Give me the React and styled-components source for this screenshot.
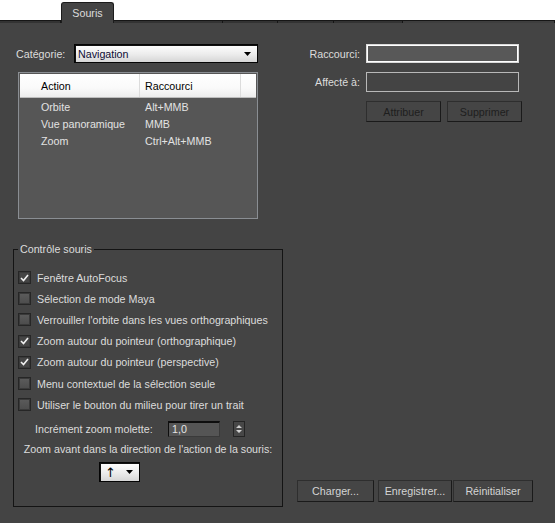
import styled, { createGlobalStyle } from 'styled-components';

const GlobalStyle = createGlobalStyle`
  html, body {
    margin: 0;
    padding: 0;
    background: #ffffff;
  }
  body {
    font-family: "Liberation Sans", Arial, sans-serif;
    font-size: 10.7px;
    color: #dcdcdc;
  }
`;

const Window = styled.div`
  width: 555px;
  height: 523px;
  display: flex;
  flex-direction: column;
`;

const TabBar = styled.div`
  height: 23px;
  display: flex;
  align-items: flex-end;
  background: #ffffff;
`;

const StubTab = styled.div`
  width: ${(p) => p.$w}px;
  flex: ${(p) => (p.$grow ? 1 : 'none')};
  height: 3px;
  box-sizing: border-box;
  background: ${(p) => (p.$light ? '#3e3e3e' : '#333333')};
  border-top: 1px solid #161616;
  border-right: 1px solid #161616;
`;

const ActiveTab = styled.div`
  width: 53px;
  height: 21px;
  box-sizing: border-box;
  background: #444444;
  border: 1px solid #1c1c1c;
  border-bottom: none;
  border-radius: 3px 3px 0 0;
  text-align: center;
  line-height: 20px;
  color: #dcdcdc;
`;

const Panel = styled.div`
  flex: 1;
  display: flex;
  background: #444444;
`;

const LeftCol = styled.div`
  width: 283px;
  box-sizing: border-box;
  padding: 21px 0 0 13px;
  display: flex;
  flex-direction: column;
`;

const RightCol = styled.div`
  flex: 1;
  display: flex;
  flex-direction: column;
  padding: 21px 0 21px 0;
`;

const CategoryRow = styled.div`
  display: flex;
  align-items: center;
  height: 19px;
  padding-left: 3px;
`;

const CategoryLabel = styled.span`
  width: 58px;
`;

const Select = styled.div`
  width: ${(p) => p.$w}px;
  height: ${(p) => p.$h}px;
  margin-left: ${(p) => p.$ml || 0}px;
  box-sizing: border-box;
  display: flex;
  align-items: center;
  justify-content: space-between;
  padding: 0 6px 0 3px;
  border: 1px solid #050505;
  box-shadow: inset 1px 1px 0 #111111;
  background: linear-gradient(#ffffff, #ececec 55%, #d6d6d6);
  color: #0d0d35;
`;

const UpGlyph = styled.span`
  color: #000000;
  font-family: "DejaVu Sans", sans-serif;
  font-size: 13px;
  line-height: 13px;
  padding-left: 2px;
`;

const DownArrow = () => (
  <svg width="7" height="4" viewBox="0 0 7 4">
    <path d="M0 0 H7 L3.5 4 Z" fill="#000" />
  </svg>
);

const ListBox = styled.div`
  width: 240px;
  height: 147px;
  margin: 9px 0 0 5px;
  box-sizing: border-box;
  border: 1px solid #8a8e93;
  padding: 1px;
  background: #565656;
`;

const ListHeader = styled.div`
  display: grid;
  grid-template-columns: 120px 101px 1fr;
  height: 23px;
  background: linear-gradient(#ffffff, #fafafa 60%, #ededed);
  border-bottom: 1px solid #bdbdbd;
  color: #000000;
`;

const HeaderCell = styled.div`
  display: flex;
  align-items: center;
  padding-left: ${(p) => p.$pl}px;
  border-right: 1px solid #dcdcdc;
`;

const ListRow = styled.div`
  display: grid;
  grid-template-columns: 120px 101px 1fr;
  height: 17px;
  align-items: center;
  color: #e2e2e2;
`;

const RowCell = styled.span`
  padding-left: ${(p) => p.$pl}px;
`;

const GroupBox = styled.fieldset`
  margin: 24px 0 0 0;
  padding: 11px 0 0 0;
  width: 270px;
  height: 264px;
  box-sizing: border-box;
  border: 1px solid #141414;
  min-width: 0;
`;

const GroupTitle = styled.legend`
  margin-left: 4px;
  padding: 0 2px;
  line-height: 13px;
  color: #dcdcdc;
`;

const CheckRow = styled.div`
  display: flex;
  align-items: center;
  height: 21.2px;
  padding-left: 4px;
`;

const Box = styled.span`
  width: 13px;
  height: 13px;
  box-sizing: border-box;
  border: 1px solid #262626;
  box-shadow: inset 0 0 0 1px #3a3a3a;
  background: ${(p) => (p.$checked ? '#454545' : 'linear-gradient(#5c5c5c, #4c4c4c)')};
  display: flex;
  align-items: center;
  justify-content: center;
  margin-right: 6px;
`;

const CheckMark = () => (
  <svg width="9" height="8" viewBox="0 0 9 8">
    <path d="M1 4 L3.5 6.5 L8 1" fill="none" stroke="#f0f0f0" strokeWidth="1.6" />
  </svg>
);

const SpinRow = styled.div`
  display: flex;
  align-items: center;
  height: 16px;
  margin-top: 6px;
  padding-left: 21px;
`;

const SpinLabel = styled.span`
  width: 133px;
`;

const SpinInput = styled.div`
  width: 52px;
  height: 16px;
  box-sizing: border-box;
  border-top: 2px solid #0e0e0e;
  border-left: 1px solid #0e0e0e;
  border-right: 1px solid #3a3a3a;
  border-bottom: 1px solid #3a3a3a;
  background: #555555;
  color: #e4e4e4;
  padding-left: 3px;
  line-height: 13px;
`;

const Spinner = styled.div`
  width: 12px;
  height: 16px;
  margin-left: 13px;
  box-sizing: border-box;
  border: 1px solid #242424;
  background: #474747;
  display: flex;
  align-items: center;
  justify-content: center;
`;

const DirectionLabel = styled.div`
  text-align: center;
  margin-top: 5px;
  line-height: 14px;
`;

const DirectionRow = styled.div`
  margin: 6px 0 0 85px;
`;

const FieldRow = styled.div`
  display: flex;
  align-items: center;
  height: ${(p) => p.$h}px;
  margin-top: ${(p) => p.$mt || 0}px;
`;

const FieldLabel = styled.span`
  width: 77px;
  text-align: right;
  margin-right: 6px;
`;

const TextField = styled.div`
  width: 153px;
  height: 100%;
  box-sizing: border-box;
  border: 1px solid ${(p) => (p.$focused ? '#dadada' : '#b8b8b8')};
  box-shadow: ${(p) => (p.$focused ? 'inset 0 0 0 1px #ffffff' : 'none')};
  background: ${(p) => (p.$focused ? '#585858' : '#444444')};
`;

const ButtonRow = styled.div`
  display: flex;
  gap: ${(p) => p.$gap}px;
  padding-left: ${(p) => p.$pl}px;
  margin-top: ${(p) => p.$mt};
`;

const Button = styled.div`
  width: ${(p) => p.$w}px;
  height: ${(p) => p.$h}px;
  margin-left: ${(p) => p.$ml || 0}px;
  box-sizing: border-box;
  display: flex;
  align-items: center;
  justify-content: center;
  background: #454545;
  border: 1px solid #2e2e2e;
  border-right-color: #1a1a1a;
  border-bottom-color: #1a1a1a;
  color: ${(p) => (p.$disabled ? '#1e1e1e' : '#d4d4d4')};
`;

const checks = [
  { label: 'Fenêtre AutoFocus', on: true },
  { label: 'Sélection de mode Maya', on: false },
  { label: "Verrouiller l'orbite dans les vues orthographiques", on: false },
  { label: 'Zoom autour du pointeur (orthographique)', on: true },
  { label: 'Zoom autour du pointeur (perspective)', on: true },
  { label: 'Menu contextuel de la sélection seule', on: false },
  { label: 'Utiliser le bouton du milieu pour tirer un trait', on: false },
];

const actions = [
  ['Orbite', 'Alt+MMB'],
  ['Vue panoramique', 'MMB'],
  ['Zoom', 'Ctrl+Alt+MMB'],
];

export default function App() {
  return (
    <>
      <GlobalStyle />
      <Window>
        <TabBar>
          <StubTab $w={61} />
          <ActiveTab>Souris</ActiveTab>
          <StubTab $w={109} />
          <StubTab $w={55} />
          <StubTab $w={56} />
          <StubTab $w={69} />
          <StubTab $grow $light />
        </TabBar>
        <Panel>
          <LeftCol>
            <CategoryRow>
              <CategoryLabel>Catégorie:</CategoryLabel>
              <Select $w={184} $h={19}>
                Navigation
                <DownArrow />
              </Select>
            </CategoryRow>

            <ListBox>
              <ListHeader>
                <HeaderCell $pl={21}>Action</HeaderCell>
                <HeaderCell $pl={5}>Raccourci</HeaderCell>
                <div />
              </ListHeader>
              {actions.map(([a, k]) => (
                <ListRow key={a}>
                  <RowCell $pl={21}>{a}</RowCell>
                  <RowCell $pl={5}>{k}</RowCell>
                </ListRow>
              ))}
            </ListBox>

            <GroupBox>
              <GroupTitle>Contrôle souris</GroupTitle>
              {checks.map((c) => (
                <CheckRow key={c.label}>
                  <Box $checked={c.on}>{c.on && <CheckMark />}</Box>
                  {c.label}
                </CheckRow>
              ))}
              <SpinRow>
                <SpinLabel>Incrément zoom molette:</SpinLabel>
                <SpinInput>1,0</SpinInput>
                <Spinner>
                  <svg width="6" height="10" viewBox="0 0 6 10">
                    <path d="M0 4 L3 1 L6 4 Z M0 6 L3 9 L6 6 Z" fill="#cfcfcf" />
                  </svg>
                </Spinner>
              </SpinRow>
              <DirectionLabel>Zoom avant dans la direction de l'action de la souris:</DirectionLabel>
              <DirectionRow>
                <Select $w={41} $h={20}>
                  <UpGlyph>↑</UpGlyph>
                  <DownArrow />
                </Select>
              </DirectionRow>
            </GroupBox>
          </LeftCol>

          <RightCol>
            <FieldRow $h={19}>
              <FieldLabel>Raccourci:</FieldLabel>
              <TextField $focused />
            </FieldRow>
            <FieldRow $h={20} $mt={9}>
              <FieldLabel>Affecté à:</FieldLabel>
              <TextField />
            </FieldRow>
            <ButtonRow $gap={6} $pl={83} $mt="9px">
              <Button $w={75} $h={21} $disabled>Attribuer</Button>
              <Button $w={75} $h={21} $disabled>Supprimer</Button>
            </ButtonRow>
            <ButtonRow $gap={4} $pl={14} $mt="auto">
              <Button $w={77} $h={22}>Charger...</Button>
              <Button $w={74} $h={22}>Enregistrer...</Button>
              <Button $w={80} $h={22} $ml={-3}>Réinitialiser</Button>
            </ButtonRow>
          </RightCol>
        </Panel>
      </Window>
    </>
  );
}
